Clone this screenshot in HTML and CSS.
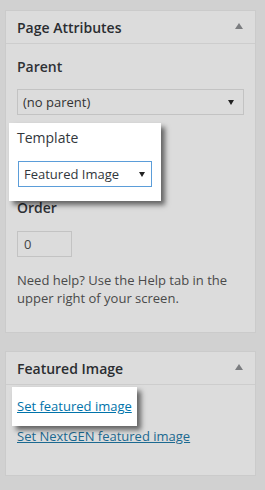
FILE: index.html
```html
<!DOCTYPE html>
<html lang="en">
<head>
    <meta charset="UTF-8">
    <meta name="viewport" content="width=device-width, initial-scale=1.0">
    <title>Page Attributes</title>
    <link rel="stylesheet" href="styles.css">
</head>
<body>

    <div class="postbox">
        <div class="postbox-header">
            <h2>Page Attributes</h2>
            <svg class="toggle" width="8" height="6" viewBox="0 0 8 6"><polygon points="0,6 4,0 8,6" /></svg>
        </div>
        <div class="inside">
            <p class="label">Parent</p>
            <div class="select">
                <span>(no parent)</span>
                <svg width="6" height="5" viewBox="0 0 6 5"><polygon points="0,0 6,0 3,5" /></svg>
            </div>

            <div class="spotlight template">
                <p class="label">Template</p>
                <div class="select focus">
                    <span>Featured Image</span>
                    <svg width="6" height="5" viewBox="0 0 6 5"><polygon points="0,0 6,0 3,5" /></svg>
                </div>
            </div>

            <p class="label order-label">Order</p>
            <div class="number">0</div>

            <p class="help">Need help? Use the Help tab in the upper right of your screen.</p>
        </div>
    </div>

    <div class="postbox second">
        <div class="postbox-header">
            <h2>Featured Image</h2>
            <svg class="toggle" width="8" height="6" viewBox="0 0 8 6"><polygon points="0,6 4,0 8,6" /></svg>
        </div>
        <div class="inside links">
            <div class="spotlight featured">
                <a href="#">Set featured image</a>
            </div>
            <a class="dim-link" href="#">Set NextGEN featured image</a>
        </div>
    </div>

</body>
</html>
```

FILE: styles.css
```css
body {
    margin: 0;
    padding: 10px 9px 0 5px;
    font-family: "Open Sans", "Liberation Sans", sans-serif;
    font-size: 13px;
    background-color: #d1d1d1;
    color: #3e3e3e;
}
.postbox {
    background: #dcdcdc;
    border: 1px solid #cbcbcb;
}
.postbox.second {
    margin-top: 18px;
}
.postbox-header {
    display: flex;
    justify-content: space-between;
    align-items: center;
    height: 32px;
    padding: 0 12px 0 11px;
    border-bottom: 1px solid #cdcdcd;
}
.postbox-header h2 {
    margin: 0;
    font-size: 14px;
    font-weight: 600;
    line-height: 19px;
    color: #2a2d31;
    padding-top: 1px;
}
.toggle {
    fill: #7b7d80;
    margin-top: -3px;
}
.inside {
    padding: 13px 11px 25px 11px;
}
.label {
    margin: 0;
    font-size: 14px;
    font-weight: 600;
    line-height: 19px;
    color: #2e3135;
}
.select {
    display: flex;
    justify-content: space-between;
    align-items: center;
    box-sizing: border-box;
    height: 26px;
    margin-top: 13px;
    padding: 0 9px 0 5px;
    border: 1px solid #c3c3c3;
    background: #dcdcdc;
    font-size: 13px;
    color: #333;
}
.select svg {
    fill: #222;
}
.spotlight {
    position: relative;
    z-index: 1;
    background: #fff;
    box-shadow: 4px 4px 5px rgba(0, 0, 0, 0.55);
}
.template {
    width: 136px;
    margin: 8px 0 0 -8px;
    padding: 5px 8px 14px 8px;
}
.template .label {
    font-weight: 500;
    color: #32373c;
}
.select.focus {
    width: 134px;
    margin-top: 14px;
    margin-left: 1px;
    padding: 0 6px 0 5px;
    background: #fff;
    border-color: #5b9dd9;
    color: #32373c;
}
.order-label {
    margin-top: -3px;
}
.number {
    box-sizing: border-box;
    width: 55px;
    height: 26px;
    margin-top: 14px;
    padding: 0 6px;
    border: 1px solid #c3c3c3;
    line-height: 24px;
    font-size: 13px;
    color: #444;
}
.help {
    margin: 14px 0 0 0;
    line-height: 18px;
    color: #4a4a4a;
}
.links {
    padding-top: 2px;
    padding-bottom: 30px;
}
.featured {
    display: inline-block;
    margin-left: -5px;
    padding: 10px 5px 11px 5px;
    line-height: 18px;
}
.featured a {
    color: #0073aa;
}
.dim-link {
    display: block;
    margin-top: 1px;
    line-height: 18px;
    color: #1b6990;
}
```
